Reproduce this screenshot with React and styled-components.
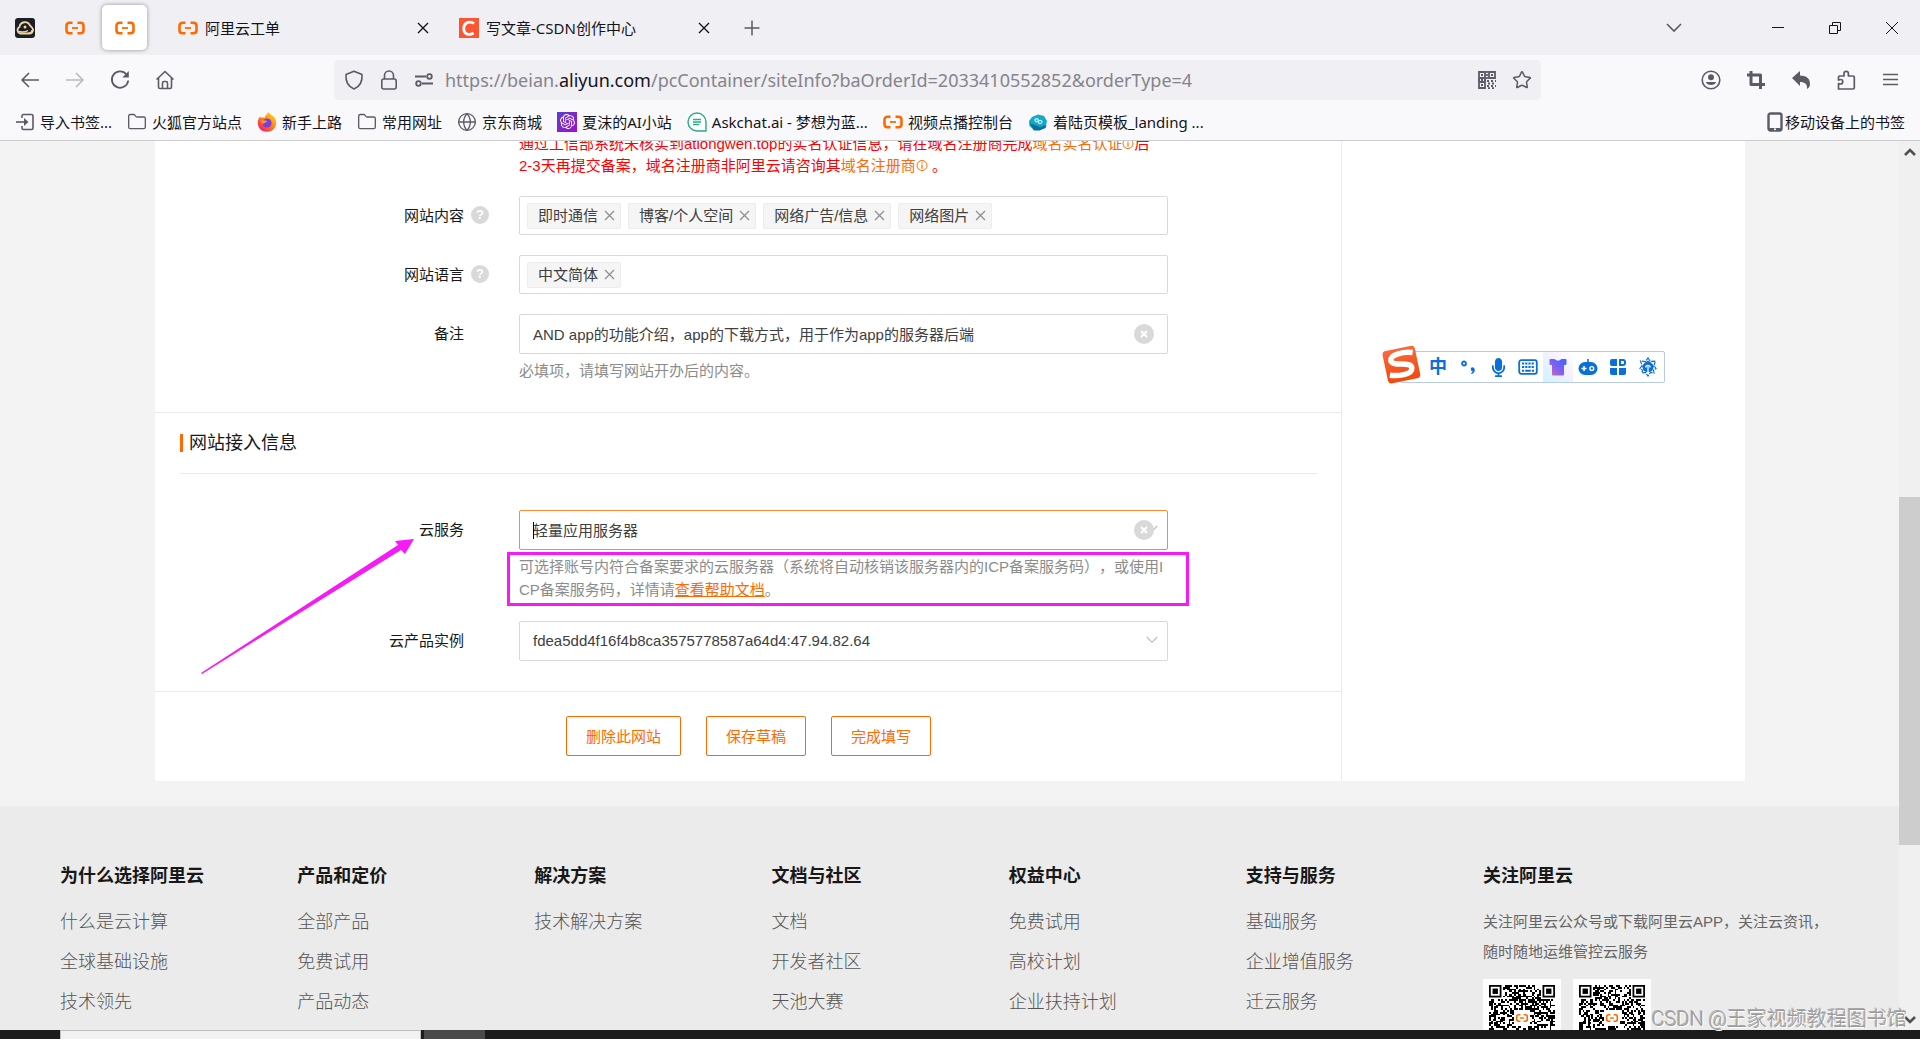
import React from 'react';
import styled, { createGlobalStyle, css } from 'styled-components';
import { Folder, Globe, Star } from 'lucide-react';
import { SiOpenai } from 'react-icons/si';
import { FaMicrophone } from 'react-icons/fa';

const bookmarks = [
  { icon: 'import', text: '导入书签...' },
  { icon: 'folder', text: '火狐官方站点' },
  { icon: 'firefox', text: '新手上路' },
  { icon: 'folder', text: '常用网址' },
  { icon: 'globe', text: '京东商城' },
  { icon: 'openai', text: '夏沫的AI小站' },
  { icon: 'askchat', text: 'Askchat.ai - 梦想为蓝...' },
  { icon: 'aliyun', text: '视频点播控制台' },
  { icon: 'landing', text: '着陆页模板_landing ...' }
];

const footerColumns = [
  { title: '为什么选择阿里云', links: [ '什么是云计算', '全球基础设施', '技术领先' ] },
  { title: '产品和定价', links: [ '全部产品', '免费试用', '产品动态' ] },
  { title: '解决方案', links: [ '技术解决方案' ] },
  { title: '文档与社区', links: [ '文档', '开发者社区', '天池大赛' ] },
  { title: '权益中心', links: [ '免费试用', '高校计划', '企业扶持计划' ] },
  { title: '支持与服务', links: [ '基础服务', '企业增值服务', '迁云服务' ] }
];

function App() {
  return (
    <Screen>
      <GlobalStyle />
      <BrowserChrome />
      <Viewport>
        <Page>
          <Card>
            <SiteForm />
            <Aside />
          </Card>
          <PageFooter />
        </Page>
        <Scrollbar>
          <ScrollArrow><Chevron up bold /></ScrollArrow>
          <ScrollTrack><ScrollThumb /></ScrollTrack>
          <ScrollArrow><Chevron bold /></ScrollArrow>
        </Scrollbar>
      </Viewport>
      <Taskbar>
        <TaskSearch />
        <TaskItem />
      </Taskbar>
      <ImeBar />
      <Watermark>CSDN @王家视频教程图书馆</Watermark>
    </Screen>
  );
}

export default App;

function BrowserChrome() {
  return (
    <header>
      <TabStrip>
        <PinnedTab aria-label="宝塔"><BaotaIcon /></PinnedTab>
        <PinnedTab aria-label="阿里云"><AliyunIcon /></PinnedTab>
        <PinnedTab aria-label="阿里云备案" $active><AliyunIcon /></PinnedTab>
        <Tab $first>
          <AliyunIcon />
          <TabTitle>阿里云工单</TabTitle>
          <TabClose aria-label="关闭标签页"><Cross size={ 12 } /></TabClose>
        </Tab>
        <Tab>
          <CsdnIcon />
          <TabTitle>写文章-CSDN创作中心</TabTitle>
          <TabClose aria-label="关闭标签页"><Cross size={ 12 } /></TabClose>
        </Tab>
        <StripButton aria-label="新建标签页">
          <Glyph size={ 16 }><path d="M8 0.5v15M0.5 8h15" /></Glyph>
        </StripButton>
        <Spacer />
        <StripButton aria-label="列出所有标签页" $list><Chevron /></StripButton>
        <WindowButton aria-label="最小化">
          <Glyph size={ 14 } width={ 1 }><path d="M1 6.5h12" /></Glyph>
        </WindowButton>
        <WindowButton aria-label="还原">
          <Glyph size={ 14 } width={ 1 }><path d="M1.5 4.5h8v8h-8zM4.5 4.5v-3h8v8h-3" /></Glyph>
        </WindowButton>
        <WindowButton aria-label="关闭"><Cross size={ 14 } width={ 1 } /></WindowButton>
      </TabStrip>

      <Toolbar>
        <ToolButton aria-label="后退">
          <Glyph size={ 20 } width={ 1.6 }><path d="M19 10H2M9 3l-7 7 7 7" /></Glyph>
        </ToolButton>
        <ToolButton aria-label="前进" disabled>
          <Glyph size={ 20 } width={ 1.6 }><path d="M1 10h17M11 3l7 7-7 7" /></Glyph>
        </ToolButton>
        <ToolButton aria-label="刷新">
          <Glyph size={ 20 } width={ 1.8 }>
            <path d="M16.5 4.5A8.2 8.2 0 1 0 18.2 10.5" />
            <path d="M18.8 1v6.5h-6.5z" fill="currentColor" stroke="none" />
          </Glyph>
        </ToolButton>
        <ToolButton aria-label="主页">
          <Glyph size={ 20 } width={ 1.6 }>
            <path d="M1.5 9.5L10 1.5l8.5 8M3.5 8v9q0 1.5 1.5 1.5h10q1.5 0 1.5-1.5V8" />
            <path d="M7.5 18v-5q0-1.5 1.5-1.5h2q1.5 0 1.5 1.5v5" />
          </Glyph>
        </ToolButton>
        <UrlBar>
          <UrlButton aria-label="跟踪保护">
            <Glyph size={ 20 } width={ 1.6 }><path d="M10 1.2L18 4.5C18.5 11 16 16.5 10 19 4 16.5 1.5 11 2 4.5z" /></Glyph>
          </UrlButton>
          <UrlButton aria-label="连接安全">
            <Glyph size={ 20 } width={ 1.6 }>
              <path d="M5.5 9V5.5a4.5 4.5 0 0 1 9 0V9" />
              <rect x="2.8" y="9" width="14.4" height="10" rx="2" />
            </Glyph>
          </UrlButton>
          <UrlButton aria-label="权限">
            <Glyph size={ 20 } width={ 1.8 }>
              <path d="M1 6.5h11M19 13.5H8" />
              <circle cx="15.5" cy="6.5" r="2.3" />
              <circle cx="4.5" cy="13.5" r="2.3" />
            </Glyph>
          </UrlButton>
          <UrlText role="textbox" aria-label="网址">
            https://beian.<b>aliyun.com</b>/pcContainer/siteInfo?baOrderId=2033410552852&amp;orderType=4
          </UrlText>
          <UrlButton aria-label="二维码"><QrGlyph /></UrlButton>
          <UrlButton aria-label="收藏"><Star size={ 20 } strokeWidth={ 1.8 } /></UrlButton>
        </UrlBar>
        <ToolButton aria-label="账户">
          <Glyph size={ 20 } width={ 1.6 }>
            <circle cx="10" cy="10" r="8.8" />
            <circle cx="10" cy="7.3" r="3" fill="currentColor" stroke="none" />
            <path d="M4.8 12h10.4a5.4 4 0 0 1-10.4 0z" fill="currentColor" stroke="none" />
          </Glyph>
        </ToolButton>
        <ToolButton aria-label="截图">
          <Glyph size={ 20 } width={ 3 }><path d="M5 1v13.5h14M1 5h13.5v14" /></Glyph>
        </ToolButton>
        <ToolButton aria-label="撤销">
          <Glyph size={ 20 }>
            <path d="M1 8l8-7v4.5c7 0 10 3.5 10 8.5 0 2-1 4-3 5 .5-5-2-7-7-7v4z" fill="currentColor" stroke="none" />
          </Glyph>
        </ToolButton>
        <ToolButton aria-label="扩展">
          <Glyph size={ 20 } width={ 1.7 }>
            <path d="M2.5 19V13.5q1 .5 2 .5a2.2 2.2 0 0 0 0-4.5q-1 0-2 .5V7q0-1 1-1H8V3.5a2.2 2.2 0 0 1 4.4 0V6H17q1.3 0 1.3 1.3v10.4q0 1.3-1.3 1.3z" />
          </Glyph>
        </ToolButton>
        <ToolButton aria-label="菜单">
          <Glyph size={ 18 } width={ 1.5 }><path d="M1 3.5h15M1 8.5h15M1 13.5h15" /></Glyph>
        </ToolButton>
      </Toolbar>

      <BookmarkBar>
        {
          bookmarks.map(item => (
            <Bookmark href="#" key={ item.text }>
              <BookmarkIcon name={ item.icon } />
              { item.text }
            </Bookmark>
          ))
        }
        <Spacer />
        <Bookmark href="#" $tight>
          <svg width="16" height="20" viewBox="0 0 16 20">
            <rect x="1.5" y="1.5" width="13" height="17" rx="2" fill="none" stroke="#5b5b66" strokeWidth="2.4" />
            <path d="M2 16h12v2.5H2z" fill="#5b5b66" />
            <circle cx="8" cy="17.3" r="1" fill="#fff" />
          </svg>
          移动设备上的书签
        </Bookmark>
      </BookmarkBar>
    </header>
  );
}

function SiteForm() {
  return (
    <Main>
      <Section>
        <Row>
          <span />
          <Warning>
            通过工信部系统未核实到atlongwen.top的实名认证信息，请在域名注册商完成<a href="#">域名实名认证<InfoIcon /></a>后<NoBreak>2-3天</NoBreak>再提交备案，域名注册商非阿里云请咨询其<a href="#">域名注册商<InfoIcon /></a> 。
          </Warning>
        </Row>
        <Row>
          <Label as="span">网站内容<Help>?</Help></Label>
          <TagBox tags={ [ '即时通信', '博客/个人空间', '网络广告/信息', '网络图片' ] } />
        </Row>
        <Row>
          <Label as="span">网站语言<Help>?</Help></Label>
          <TagBox tags={ [ '中文简体' ] } />
        </Row>
        <Row>
          <Label htmlFor="remark">备注</Label>
          <div>
            <Field>
              <Input id="remark" defaultValue="AND app的功能介绍，app的下载方式，用于作为app的服务器后端" />
              <ClearButton aria-label="清除备注"><Cross size={ 8 } width={ 2 } /></ClearButton>
            </Field>
            <Hint>必填项，请填写网站开办后的内容。</Hint>
          </div>
        </Row>
      </Section>

      <Section>
        <SectionTitle>网站接入信息</SectionTitle>
        <Row>
          <Label htmlFor="service">云服务</Label>
          <div>
            <Field>
              <Input id="service" defaultValue="轻量应用服务器" $active />
              <Caret />
              <FieldArrow><Chevron size={ 12 } /></FieldArrow>
              <ClearButton aria-label="清除云服务"><Cross size={ 8 } width={ 2 } /></ClearButton>
            </Field>
            <Hint>
              可选择账号内符合备案要求的云服务器（系统将自动核销该服务器内的ICP备案服务码），或使用ICP备案服务码，详情请<a href="#">查看帮助文档</a>。
              <Marker />
            </Hint>
          </div>
          <Arrow viewBox="0 0 214 136">
            <path d="M0 134L197 6 194 2 213 0 204 15 200 11 1 135z" fill="#f61af6" />
          </Arrow>
        </Row>
        <Row>
          <Label htmlFor="instance">云产品实例</Label>
          <Field>
            <Select id="instance">
              <option>fdea5dd4f16f4b8ca3575778587a64d4:47.94.82.64</option>
            </Select>
            <FieldArrow><Chevron size={ 12 } /></FieldArrow>
          </Field>
        </Row>
      </Section>

      <Actions>
        <Button>删除此网站</Button>
        <Button>保存草稿</Button>
        <Button>完成填写</Button>
      </Actions>
    </Main>
  );
}

function TagBox({ tags }) {
  return (
    <Tags>
      {
        tags.map(tag => (
          <Tag key={ tag }>
            { tag }
            <button aria-label={ `移除${tag}` }><Cross size={ 11 } width={ 1.2 } /></button>
          </Tag>
        ))
      }
    </Tags>
  );
}

function PageFooter() {
  return (
    <Footer>
      {
        footerColumns.map(column => (
          <FooterColumn key={ column.title }>
            <h3>{ column.title }</h3>
            { column.links.map(link => <a href="#" key={ link }>{ link }</a>) }
          </FooterColumn>
        ))
      }
      <FooterColumn>
        <h3>关注阿里云</h3>
        <p>关注阿里云公众号或下载阿里云APP，关注云资讯，<br />随时随地运维管控云服务</p>
        <QrList>
          <QrCode seed={ 7 } />
          <QrCode seed={ 23 } />
        </QrList>
      </FooterColumn>
    </Footer>
  );
}

function ImeBar() {
  return (
    <Ime>
      <svg width="42" height="42" viewBox="0 0 42 42">
        <defs>
          <linearGradient id="sogou" x1="0" y1="0" x2="0" y2="1">
            <stop offset="0" stopColor="#f9683c" />
            <stop offset="1" stopColor="#f04a10" />
          </linearGradient>
        </defs>
        <g transform="rotate(-12 21 21)">
          <rect x="4" y="4" width="33" height="33" rx="4" fill="url(#sogou)" />
          <path d="M34 11C26 8 11 8 11 14.5S31 19 30 26 14 31 7 28.5" fill="none" stroke="#fff" strokeWidth="5.5" />
        </g>
      </svg>
      <ImeKey>中</ImeKey>
      <ImeKey>
        <svg width="18" height="18" viewBox="0 0 18 18">
          <circle cx="5" cy="5.5" r="2" fill="none" stroke="currentColor" strokeWidth="1.8" />
          <path d="M12.5 9.5a2.4 2.4 0 0 1 3.3 2.3c0 2-1.3 3.7-3.3 4.3l-.5-1c1-.5 1.5-1 1.5-1.8a2.2 2.2 0 0 1-1-3.8z" fill="currentColor" />
        </svg>
      </ImeKey>
      <ImeKey><FaMicrophone size={ 19 } /></ImeKey>
      <ImeKey>
        <svg width="20" height="16" viewBox="0 0 20 16" fill="none" stroke="currentColor">
          <rect x="1.2" y="1.2" width="17.6" height="13.6" rx="2" strokeWidth="1.8" />
          <path d="M4 4.5h12M4 8h12" strokeWidth="2.2" strokeDasharray="2.2 1" />
          <path d="M4 11.7h2.2M7.2 11.7h5.6M13.8 11.7H16" strokeWidth="2" />
        </svg>
      </ImeKey>
      <ImeKey $tinted>
        <svg width="20" height="20" viewBox="0 0 20 20">
          <defs>
            <linearGradient id="shirt" x1="1" y1="0" x2="0" y2="1">
              <stop offset="0.2" stopColor="#4a66f8" />
              <stop offset="0.6" stopColor="#8a5ff0" />
              <stop offset="0.9" stopColor="#c06ab0" />
            </linearGradient>
          </defs>
          <path d="M2.5 2h4q3.5 3.5 7 0h4q1 0 1 1v4q0 1-1 1H16v9.5q0 1-1 1H5q-1 0-1-1V8H2.5q-1 0-1-1V3q0-1 1-1z" fill="url(#shirt)" />
        </svg>
      </ImeKey>
      <ImeKey>
        <svg width="20" height="18" viewBox="0 0 20 18">
          <path d="M9.2 1h1.6v4H9.2z" fill="currentColor" />
          <rect x="0.5" y="4" width="19" height="13" rx="6.5" fill="currentColor" />
          <path d="M3.5 10.5h5M6 8v5" stroke="#fff" strokeWidth="1.5" />
          <circle cx="13.8" cy="10.5" r="1.9" fill="none" stroke="#fff" strokeWidth="1.4" />
        </svg>
      </ImeKey>
      <ImeKey>
        <svg width="18" height="18" viewBox="0 0 18 18" fill="currentColor">
          <path d="M3 1h5v7H3Q1 8 1 6V3q0-2 2-2zM1 10h7v7H3q-2 0-2-2zM10 10h7v5q0 2-2 2h-5z" />
          <path d="M11 2h3q2 0 2 2v1q0 2-2 2h-3z" fill="none" stroke="currentColor" strokeWidth="2" />
        </svg>
      </ImeKey>
      <ImeKey>
        <svg width="18" height="20" viewBox="0 0 18 20" fill="none">
          <path d="M9 1l2.5 3.5L16.500 4l-1.5 4.5 2 3-2.5 1.5.5 3-3.5-.5L9 19l-2.5-3.5L3 16l.5-3L1 11.5l2-3L1.5 4l5 .5z" stroke="currentColor" strokeWidth="1.2" strokeDasharray="4 1" />
          <path d="M9 3.5l3 2 3 3.5-1.5 4.5L11 15H7l-2.5-1.5L3 9l3-3.5z" fill="currentColor" />
          <path d="M9 9.5V17M6.8 10.5a2.2 2.2 0 0 1 4.4 0" stroke="#fff" strokeWidth="1.3" />
        </svg>
      </ImeKey>
    </Ime>
  );
}

/* icons */

function Glyph({ size, width = 1.5, children }) {
  return (
    <svg
      width={ size }
      height={ size }
      viewBox={ `0 0 ${size} ${size}` }
      fill="none"
      stroke="currentColor"
      strokeWidth={ width }
      strokeLinejoin="round"
    >
      { children }
    </svg>
  );
}

function Cross({ size, width = 1.4 }) {
  return (
    <Glyph size={ size } width={ width }>
      <path d={ `M1 1L${size - 1} ${size - 1}M${size - 1} 1L1 ${size - 1}` } />
    </Glyph>
  );
}

function Chevron({ size = 16, up, bold }) {
  return (
    <svg width={ size } height={ size } viewBox="0 0 16 16" fill="none" stroke="currentColor" strokeWidth={ bold ? 2.6 : 1.6 }>
      <path d={ up ? 'M3 11l5-5 5 5' : bold ? 'M3 5l5 5 5-5' : 'M1 4l7 7 7-7' } />
    </svg>
  );
}

function AliyunIcon({ size = 20 }) {
  return (
    <svg width={ size } height={ size } viewBox="0 0 20 20" fill="none" stroke="#ff6a00">
      <path d="M7.5 4.8h-3q-3 0-3 3v4.4q0 3 3 3h3M12.5 4.8h3q3 0 3 3v4.4q0 3-3 3h-3" strokeWidth="2.6" />
      <path d="M7 10h6" strokeWidth="1.8" />
    </svg>
  );
}

function BaotaIcon() {
  return (
    <svg width="20" height="20" viewBox="0 0 20 20">
      <rect width="20" height="20" rx="3" fill="#1d1f26" />
      <path d="M5 15.500a3.5 3.5 0 0 1-.5-6.5A5.5 5.5 0 0 1 15 7.5c1.5 1.5 3.500 3 3 5s-2 3-3.5 3z" fill="none" stroke="#f0d5a0" strokeWidth="1.8" />
      <path d="M3 13.5c3 .5 7 1 10-1M13 15a3 3 0 0 0 4-3" fill="none" stroke="#f0d5a0" strokeWidth="1.5" />
      <circle cx="10" cy="9" r="1.5" fill="#f0d5a0" />
    </svg>
  );
}

function CsdnIcon() {
  return (
    <svg width="20" height="20" viewBox="0 0 20 20">
      <rect width="20" height="20" fill="#fc5531" />
      <path d="M15 5.5C12 3 5 3.5 4.8 10.5 4.6 17 11 17.5 14.5 15" fill="none" stroke="#fff" strokeWidth="2.8" />
    </svg>
  );
}

function QrGlyph() {
  return (
    <svg width="18" height="18" viewBox="0 0 18 18" fill="none" stroke="currentColor" strokeWidth="1.8">
      <path d="M1 1h6v6H1zM11 1h6v6h-6zM1 11h6v6H1z" />
      <path d="M3 4h2M13 4h2M3 14h2M9 0v9M0 9h9" strokeDasharray="2 1" />
      <path d="M9 10h9M10 12.5h8M9 15h9M10 17.2h8" strokeDasharray="2 2" />
    </svg>
  );
}

function InfoIcon() {
  return (
    <InfoSvg width="12" height="13" viewBox="0 0 12 13" fill="none" stroke="currentColor">
      <circle cx="6" cy="6.5" r="5" />
      <path d="M6 3.3v1.2M6 5.5v4.2" strokeWidth="1.2" />
    </InfoSvg>
  );
}

function BookmarkIcon({ name }) {
  if(name === 'folder') return <Folder size={ 20 } strokeWidth={ 1.6 } color="#5b5b66" />;
  if(name === 'globe') return <Globe size={ 20 } strokeWidth={ 1.6 } color="#5b5b66" />;
  if(name === 'aliyun') return <AliyunIcon />;

  if(name === 'openai') {
    return <OpenAiTile><SiOpenai size={ 15 } /></OpenAiTile>;
  }

  if(name === 'import') {
    return (
      <svg width="20" height="20" viewBox="0 0 20 20" fill="none" stroke="#5b5b66" strokeWidth="1.6">
        <path d="M7 6V4q0-1.5 1.5-1.5h8Q18 2.5 18 4v12q0 1.5-1.5 1.5h-8Q7 17.5 7 16v-2" />
        <path d="M1 10h10" />
        <path d="M9 6l4.5 4L9 14z" fill="#5b5b66" stroke="none" />
      </svg>
    );
  }

  if(name === 'firefox') {
    return (
      <svg width="20" height="20" viewBox="0 0 20 20">
        <defs>
          <linearGradient id="fox" x1="1" y1="0" x2="0.2" y2="1">
            <stop offset="0" stopColor="#ffe226" />
            <stop offset="0.5" stopColor="#ff8a16" />
            <stop offset="1" stopColor="#f5156c" />
          </linearGradient>
        </defs>
        <path d="M12 .3c0 2 4 3 6.2 6.2C20.5 11 19 19.7 10 19.7 3 19.7.5 14 .8 10 1 7.5 2 5.5 3.2 4.5L4 6c1-.6 2.5-.6 3.5 0C8 4 10 1.5 12 .3z" fill="url(#fox)" />
        <circle cx="10" cy="11" r="4.6" fill="#7a3fd8" />
        <path d="M3.5 9.5C5 7.5 8 8 10.5 9.5 8.5 10 8 11 7 11.5 5.5 12 4 11 3.5 9.5z" fill="#ff9a1c" />
      </svg>
    );
  }

  if(name === 'askchat') {
    return (
      <svg width="20" height="20" viewBox="0 0 20 20" fill="none" stroke="#2bab86">
        <path d="M19 19h-9a9 9 0 1 1 9-9z" fill="#fff" strokeWidth="1.4" />
        <path d="M6 7.5h8M6 10h8M6 12.5h6" strokeWidth="1.5" />
      </svg>
    );
  }

  return (
    <svg width="20" height="20" viewBox="0 0 20 20">
      <path d="M4 5l6-2.5 6 1.5 3 5-1.5 6-6 3H6L1.5 14 1 9z" fill="#10a9c9" />
      <path d="M1.5 11L12 15l6.5-2-1 3-6 2.5H6z" fill="#0b6e9c" />
      <path d="M7 7.5c3-2.5 4 1 2.5 2s-3-1-2.5-2zM10.5 9c3-2 4.5 1 2.5 2.2S10 10.5 10.5 9z" fill="none" stroke="#c5f3fb" strokeWidth="1.2" />
    </svg>
  );
}

const QR_SIZE = 37;

// deterministic modules, with the three finder squares left free
function buildModules(seed) {
  let state = seed * 7919 + 17;
  let path = '';

  for(let y = 0; y < QR_SIZE; y++) {
    for(let x = 0; x < QR_SIZE; x++) {
      state = (state * 1103515245 + 12345) % 2147483648;
      const finder = (x < 8 && y < 8) || (x > 28 && y < 8) || (x < 8 && y > 28);
      const logo = x > 13 && x < 23 && y > 13 && y < 23;

      if(!finder && !logo && state / 2147483648 > 0.48) path += `M${x} ${y}h1v1h-1z`;
    }
  }

  return path;
}

function QrCode({ seed }) {
  return (
    <QrTile>
      <svg width="66" height="66" viewBox="0 0 37 37">
        <path d={ buildModules(seed) } fill="#000" shapeRendering="crispEdges" />
        {
          [ [ 0, 0 ], [ 30, 0 ], [ 0, 30 ] ].map(([ x, y ]) => (
            <g key={ `${x}-${y}` }>
              <rect x={ x + 0.5 } y={ y + 0.5 } width="6" height="6" fill="none" stroke="#000" />
              <rect x={ x + 2 } y={ y + 2 } width="3" height="3" fill="#000" />
            </g>
          ))
        }
        <g transform="translate(15 15) scale(0.35)" fill="none" stroke="#ff6a00">
          <path d="M7.5 4.8h-3q-3 0-3 3v4.4q0 3 3 3h3M12.5 4.8h3q3 0 3 3v4.4q0 3-3 3h-3M7 10h6" strokeWidth="2.6" />
        </g>
      </svg>
    </QrTile>
  );
}

/* styles */

const GlobalStyle = createGlobalStyle`
  * {
    box-sizing: border-box;
  }

  body {
    margin: 0;
    font-family: 'Liberation Sans', 'Noto Sans CJK SC', sans-serif;
    font-size: 15px;
    color: #181818;
    text-spacing-trim: space-all;
  }

  button, input, select {
    font: inherit;
    color: inherit;
  }

  button {
    display: flex;
    align-items: center;
    justify-content: center;
    padding: 0;
    border: 0;
    background: none;
  }

  a {
    color: inherit;
    text-decoration: none;
  }

  svg {
    display: block;
    flex: none;
  }
`;

const Screen = styled.div`
  position: relative;
  display: flex;
  flex-direction: column;
  height: 100vh;
  overflow: hidden;
`;

const Spacer = styled.div`
  flex: 1;
`;

const TabStrip = styled.div`
  display: flex;
  align-items: center;
  gap: 5px;
  height: 55px;
  padding-left: 2px;
  background: #f0eff4;
  color: #15141a;
  font-family: 'Noto Sans', 'Noto Sans CJK SC', sans-serif;
`;

const PinnedTab = styled.button`
  width: 45px;
  height: 45px;
  border-radius: 5px;

  ${props => props.$active && css`
    background: #fff;
    box-shadow: 0 0 4px rgba(0, 0, 0, 0.4);
  `}
`;

const Tab = styled.div`
  display: flex;
  align-items: center;
  gap: 7px;
  width: 276px;
  height: 45px;
  margin-left: ${props => props.$first ? '13px' : '0'};
  padding: 0 12px 0 13px;
`;

const TabTitle = styled.span`
  flex: 1;
  line-height: 20px;
  white-space: nowrap;
`;

const TabClose = styled.button`
  width: 12px;
  height: 20px;
`;

const StripButton = styled.button`
  width: 40px;
  height: 40px;
  margin-left: 5px;
  margin-right: ${props => props.$list ? '50px' : '0'};
  color: #5b5b66;
`;

const WindowButton = styled.button`
  width: 57px;
  height: 55px;

  & + & {
    margin-left: -5px;
  }
`;

const Toolbar = styled.div`
  display: flex;
  align-items: center;
  height: 50px;
  padding: 0 7px;
  background: #f9f9fb;
`;

const ToolButton = styled.button`
  width: 45px;
  height: 40px;
  color: #5b5b66;

  &:disabled {
    opacity: 0.4;
  }
`;

const UrlBar = styled.div`
  display: flex;
  flex: 1;
  align-items: center;
  height: 40px;
  margin: 0 147px;
  padding: 0 2px;
  border-radius: 5px;
  background: #f0eff4;
`;

const UrlButton = styled.button`
  width: 35px;
  height: 40px;
  color: #5b5b66;
`;

const UrlText = styled.div`
  flex: 1;
  min-width: 0;
  padding-left: 4px;
  overflow: hidden;
  color: #85848b;
  font-family: 'Noto Sans', sans-serif;
  font-size: 18px;
  line-height: 26px;
  white-space: nowrap;

  b {
    color: #15141a;
    font-weight: normal;
  }
`;

const BookmarkBar = styled.nav`
  display: flex;
  align-items: center;
  gap: 15px;
  height: 36px;
  padding: 0 15px 2px;
  border-bottom: 1px solid #cccccd;
  background: #f9f9fb;
  color: #15141a;
  font-family: 'Noto Sans', 'Noto Sans CJK SC', sans-serif;
`;

const Bookmark = styled.a`
  display: flex;
  align-items: center;
  gap: ${props => props.$tight ? '2px' : '5px'};
  line-height: 20px;
  white-space: nowrap;
`;

const OpenAiTile = styled.span`
  display: flex;
  align-items: center;
  justify-content: center;
  width: 20px;
  height: 20px;
  background: linear-gradient(135deg, #5a3fd0, #a30fc8);
  color: #fff;
`;

const Viewport = styled.div`
  display: flex;
  flex: 1;
  min-height: 0;
`;

const Page = styled.div`
  flex: 1;
  min-width: 0;
  overflow: hidden;
  background: #f3f3f3;
`;

const Card = styled.div`
  display: flex;
  margin: 0 154px 25px 155px;
  background: #fff;
`;

const Main = styled.main`
  flex: 1;
  min-width: 0;
`;

const Aside = styled.aside`
  width: 404px;
  border-left: 1px solid #ebebeb;
`;

const Section = styled.section`
  display: flex;
  flex-direction: column;
  gap: 20px;
  padding-bottom: 30px;
  border-bottom: 1px solid #ebebeb;

  /* the page is scrolled, so its first line is cut by the toolbar */
  &:first-child {
    margin-top: -9px;
  }
`;

const SectionTitle = styled.h2`
  display: flex;
  align-items: center;
  gap: 6px;
  margin: 0 24px 16px 25px;
  padding: 18px 0;
  border-bottom: 1px solid #ebebeb;
  font-size: 18px;
  font-weight: normal;
  line-height: 24px;

  &::before {
    content: '';
    width: 3px;
    height: 18px;
    background: #ff6a00;
  }
`;

const Row = styled.div`
  position: relative;
  display: grid;
  grid-template-columns: 364px minmax(0, 649px);
`;

const Label = styled.label`
  position: relative;
  height: 39px;
  padding-right: 55px;
  line-height: 39px;
  text-align: right;
`;

const Help = styled.i`
  position: absolute;
  top: 10px;
  right: 30px;
  width: 18px;
  height: 18px;
  border-radius: 50%;
  background: #d9d9d9;
  color: #fff;
  font-size: 13px;
  font-style: normal;
  font-weight: bold;
  line-height: 18px;
  text-align: center;
`;

const Warning = styled.p`
  margin: 1px 0 -1px;
  color: #f00;
  line-height: 22px;

  a {
    color: #ff6a00;
  }
`;

const NoBreak = styled.span`
  white-space: nowrap;
`;

const InfoSvg = styled.svg`
  display: inline-block;
  vertical-align: -1px;
`;

const Tags = styled.div`
  display: flex;
  align-items: center;
  gap: 7px;
  height: 39px;
  padding: 0 7px;
  border: 1px solid #d9d9d9;
  border-radius: 2px;
`;

const Tag = styled.span`
  display: flex;
  align-items: center;
  gap: 6px;
  height: 26px;
  padding: 0 5px 0 10px;
  border: 1px solid #ededed;
  border-radius: 2px;
  background: #f5f5f5;
  color: #404040;
  line-height: 22px;
  white-space: nowrap;

  button {
    color: #8c8c8c;
  }
`;

const Field = styled.div`
  position: relative;
  height: 40px;
`;

const control = css`
  width: 100%;
  height: 40px;
  padding: 0 13px 2px;
  border: 1px solid #d9d9d9;
  border-radius: 2px;
  outline: none;
  background: #fff;
  color: #404040;
`;

const Input = styled.input`
  ${control}
  border-color: ${props => props.$active ? '#ff8a33' : '#d9d9d9'};
`;

const Select = styled.select`
  ${control}
  appearance: none;
`;

const Caret = styled.span`
  position: absolute;
  top: 12px;
  left: 14px;
  width: 1px;
  height: 17px;
  background: #000;
`;

const FieldArrow = styled.span`
  position: absolute;
  top: 13px;
  right: 10px;
  color: #bfbfbf;
  pointer-events: none;
`;

const ClearButton = styled.button`
  position: absolute;
  top: 10px;
  right: 14px;
  width: 20px;
  height: 20px;
  border-radius: 50%;
  background: #d9d9d9;
  color: #fff;
`;

const Hint = styled.p`
  position: relative;
  margin: 5px 0 0;
  color: #8c8c8c;
  line-height: 23px;
  word-break: break-all;

  a {
    color: #ff6a00;
    text-decoration: underline;
  }
`;

const Marker = styled.span`
  position: absolute;
  inset: -3px -21px -5px -12px;
  border: 3px solid #f61af6;
  pointer-events: none;
`;

const Arrow = styled.svg`
  position: absolute;
  top: 29px;
  left: 46px;
  width: 214px;
  height: 136px;
  pointer-events: none;
`;

const Actions = styled.div`
  display: flex;
  gap: 25px;
  padding: 24px 0 25px 411px;
`;

const Button = styled.button`
  height: 40px;
  padding: 0 19px 2px;
  border: 1px solid #ff6a00;
  border-radius: 2px;
  color: #ff6a00;
`;

const Footer = styled.footer`
  display: grid;
  grid-template-columns: repeat(6, 1fr) 416px;
  padding: 56px 0 40px 60px;
  background: #ebebeb;
`;

const FooterColumn = styled.div`
  color: #666;
  white-space: nowrap;

  h3 {
    margin: 0 0 12px;
    color: #181818;
    font-size: 18px;
    line-height: 28px;
  }

  a {
    display: block;
    color: #555;
    font-size: 18px;
    font-weight: 300;
    line-height: 40px;
  }

  p {
    margin: 17px 0 12px;
    line-height: 30px;
  }
`;

const QrList = styled.div`
  display: flex;
  gap: 12px;
`;

const QrTile = styled.div`
  padding: 6px;
  background: #fff;
`;

const Scrollbar = styled.div`
  display: flex;
  flex-direction: column;
  width: 21px;
  background: #f0f0f0;
`;

const ScrollArrow = styled.div`
  display: flex;
  align-items: center;
  justify-content: center;
  height: 21px;
  color: #505050;
`;

const ScrollTrack = styled.div`
  flex: 1;
  padding-top: 335px;
`;

const ScrollThumb = styled.div`
  height: 348px;
  background: #cdcdcd;
`;

const Taskbar = styled.div`
  display: flex;
  gap: 3px;
  height: 9px;
  padding-left: 60px;
  background: #1c1c1c;
`;

const TaskSearch = styled.div`
  width: 361px;
  border: 1px solid #bdbdbd;
  border-bottom: 0;
  background: #f2f2f2;
`;

const TaskItem = styled.div`
  width: 61px;
  background: #4a4a4a;
`;

/* input method window, floating over the page */
const Ime = styled.div`
  position: absolute;
  top: 351px;
  left: 1400px;
  display: flex;
  align-items: center;
  width: 265px;
  height: 32px;
  border: 1px solid #b9cbe0;
  border-radius: 2px;
  background: #fff;
  color: #0a6fd8;

  > svg {
    margin-left: -20px;
    margin-top: -4px;
  }
`;

const ImeKey = styled.span`
  display: flex;
  flex: none;
  align-items: center;
  justify-content: center;
  width: 30px;
  height: 30px;
  font-size: 18px;
  font-weight: bold;
  line-height: 30px;

  ${props => props.$tinted && css`
    background: linear-gradient(45deg, #c9f5ff, #f7f0ff 60%, #fff);
  `}
`;

const Watermark = styled.div`
  position: absolute;
  right: 13px;
  bottom: 6px;
  color: #9a9a9a;
  font-family: Roboto, 'Noto Sans CJK SC', sans-serif;
  font-size: 20px;
  font-weight: 300;
  line-height: 28px;
  text-shadow: 1px 1px 0 #fff, -1px -1px 0 #a8a8a8;
  white-space: nowrap;
`;
